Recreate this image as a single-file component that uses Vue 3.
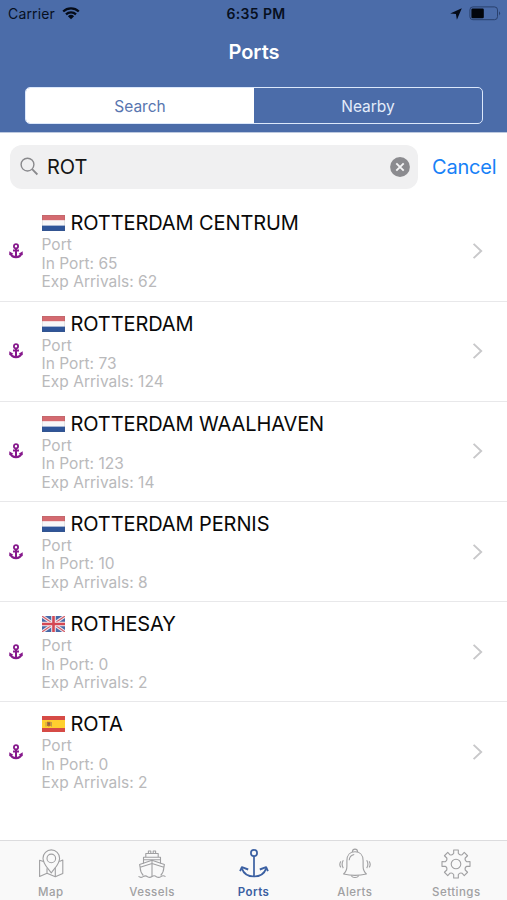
<script setup>
const ports = [
  { name: 'ROTTERDAM CENTRUM', flag: 'nl', inPort: 65, arrivals: 62 },
  { name: 'ROTTERDAM', flag: 'nl', inPort: 73, arrivals: 124 },
  { name: 'ROTTERDAM WAALHAVEN', flag: 'nl', inPort: 123, arrivals: 14 },
  { name: 'ROTTERDAM PERNIS', flag: 'nl', inPort: 10, arrivals: 8 },
  { name: 'ROTHESAY', flag: 'gb', inPort: 0, arrivals: 2 },
  { name: 'ROTA', flag: 'es', inPort: 0, arrivals: 2 },
]
const tabs = ['Map', 'Vessels', 'Ports', 'Alerts', 'Settings']

// Outline of an eight-toothed gear centred on 16,16, with rounded valleys between the teeth
function gearPath() {
  const at = (r, deg) => {
    const a = (deg * Math.PI) / 180
    return `${(16 + r * Math.sin(a)).toFixed(2)} ${(16 - r * Math.cos(a)).toFixed(2)}`
  }
  let d = ''
  for (let i = 0; i < 8; i++) {
    const c = i * 45
    d += `${i ? 'L' : 'M'}${at(11, c - 12)}L${at(14.2, c - 9.5)}L${at(14.2, c + 9.5)}L${at(11, c + 12)}Q${at(9.2, c + 22.5)} ${at(11, c + 33)}`
  }
  return `${d}Z`
}
const gear = gearPath()
</script>

<template>
  <div class="screen">
    <header class="header">
      <div class="status">
        <div class="carrier">
          <span>Carrier</span>
          <svg width="18" height="13" viewBox="0 0 18 13">
            <path d="M1.2 4.5a11.3 11.3 0 0 1 15.6 0M4 7.4a7.3 7.3 0 0 1 10 0" fill="none" stroke="#050b18" stroke-width="2.3" />
            <path d="M9 12.3 5.9 9.3a4.5 4.5 0 0 1 6.2 0Z" fill="#050b18" />
          </svg>
        </div>
        <div class="clock">6:35 PM</div>
        <div class="indicators">
          <svg width="12" height="12" viewBox="0 0 12 12"><path d="M11.8.2 6.9 11.8 5.9 6.1.2 5.5Z" fill="#050b18" /></svg>
          <svg width="32" height="15" viewBox="0 0 32 15">
            <rect x=".9" y=".9" width="27.6" height="12.8" rx="3" fill="none" stroke="#29406d" stroke-width="1" />
            <rect x="2.4" y="2.5" width="12.4" height="9.7" rx="1.2" fill="#02050b" />
            <path d="M30 5.2q2.2 2.1 0 4.2Z" fill="#29406d" />
          </svg>
        </div>
      </div>
      <h1 class="title">Ports</h1>
      <div class="segments">
        <div class="segment selected">Search</div>
        <div class="segment">Nearby</div>
      </div>
    </header>

    <div class="search">
      <div class="field">
        <svg width="20" height="20" viewBox="0 0 20 20" fill="none" stroke="#89898c" stroke-width="1.4">
          <circle cx="7.5" cy="7.6" r="6.4" /><path d="m12.1 12.2 5.3 5.3" stroke-width="1.8" />
        </svg>
        <span class="query">ROT</span>
        <svg class="clear" width="20" height="20" viewBox="0 0 20 20">
          <circle cx="10" cy="10" r="9.9" fill="#8b8b8f" />
          <path d="m6.3 6.3 7.4 7.4m0-7.4-7.4 7.4" stroke="#f5f5f6" stroke-width="1.9" />
        </svg>
      </div>
      <span class="cancel">Cancel</span>
    </div>

    <main class="list">
      <article v-for="port in ports" :key="port.name" class="row">
        <svg class="anchor" width="14" height="16" viewBox="0 0 14 16" fill="none" stroke="#86198c">
          <circle cx="7" cy="3.2" r="2.1" stroke-width="1.8" />
          <path d="M7 5.3v8.6M4 7.4h6" stroke-width="2" />
          <path d="M1.5 10.4c.8 2.4 2.6 3.7 5.5 3.8 2.9-.1 4.7-1.4 5.5-3.8" stroke-width="2.2" />
          <path d="M.3 8.3v4l4-1.6ZM13.7 8.3v4l-4-1.6Z" fill="#86198c" stroke="none" />
        </svg>
        <div class="info">
          <div class="name">
            <svg v-if="port.flag === 'nl'" width="23" height="16" viewBox="0 0 23 16">
              <path fill="#d46a70" d="M0 0h23v5.5H0z" /><path fill="#f7f7f8" d="M0 5.4h23v5.3H0z" /><path fill="#2f5599" d="M0 10.6h23V16H0z" />
              <path d="M.3.3h22.4v15.4H.3z" fill="none" stroke="#555" stroke-opacity=".25" stroke-width=".6" />
            </svg>
            <svg v-else-if="port.flag === 'gb'" width="23" height="16" viewBox="0 0 23 16">
              <path fill="#4969a6" d="M0 0h23v16H0z" />
              <path d="m0 0 23 16M23 0 0 16" stroke="#eee9ef" stroke-width="3.2" />
              <path d="m0 0 23 16M23 0 0 16" stroke="#d65c66" stroke-width="1.1" />
              <path d="M11.5 0v16M0 8h23" stroke="#f2edf0" stroke-width="4.6" />
              <path d="M11.5 0v16M0 8h23" stroke="#d44853" stroke-width="2.6" />
            </svg>
            <svg v-else width="23" height="16" viewBox="0 0 23 16">
              <path fill="#d64b46" d="M0 0h23v16H0z" /><path fill="#ffd02f" d="M0 4h23v8H0z" />
              <path d="M4 6v4.6M9.5 6v4.6" stroke="#b9984c" stroke-width=".9" />
              <path d="M5 5.7h3.6v3.5q-1.8 2.4-3.6 0Z" fill="#b66b37" />
              <circle cx="6.9" cy="7.8" r="1" fill="#6f6d51" />
            </svg>
            <span>{{ port.name }}</span>
          </div>
          <div class="detail">Port</div>
          <div class="detail">In Port: {{ port.inPort }}</div>
          <div class="detail">Exp Arrivals: {{ port.arrivals }}</div>
        </div>
        <svg class="chevron" width="11" height="18" viewBox="0 0 11 18"><path d="m1.6 1.9 7.6 7.1-7.6 7.1" fill="none" stroke="#c8c8ca" stroke-width="1.9" /></svg>
      </article>
    </main>

    <nav class="tabs">
      <div v-for="tab in tabs" :key="tab" class="tab" :class="{ active: tab === 'Ports' }">
        <svg width="32" height="32" viewBox="0 0 32 32" fill="none" stroke="currentColor" stroke-width="1.1" stroke-linejoin="round">
          <g v-if="tab === 'Map'">
            <path d="M16.3 25C13.5 20.5 8 16.5 8 10.2a8.3 8.3 0 0 1 16.6 0C24.6 16.5 19 20.5 16.3 25Z" />
            <circle cx="16.3" cy="10.4" r="4.3" />
            <path d="M8.5 13.5 4.6 12.2v16.2l7.4-3.2 8.3 3.6 7.5-3.2V12l-3.4 1.4M12 20.2v5M20.3 19.7v9.1" />
          </g>
          <g v-else-if="tab === 'Vessels'">
            <path d="M12.4 5.5V3h2.4v2.5M17.2 5.5V3h2.4v2.5M9.8 5.5h12.4v3.7H9.8zM7.5 15.4V9.2h17v6.2M7.5 11.8h17" />
            <path d="m3.6 16.4 12.4-4.2 12.4 4.2-.5 2.9L16 15.5 4.1 19.3ZM4.1 19.3q.2 5 3.2 8.2M27.9 19.3q-.2 5-3.2 8.2M16 12.2v16" />
            <path d="M2.5 28.4q2.3 1.8 4.6.2 2.2-1.6 4.5.1 2.2 1.4 4.4-.2 2.2-1.6 4.4.2 2.3 1.5 4.5-.1 2.2-1.6 4.6 0" />
          </g>
          <g v-else-if="tab === 'Ports'" stroke-width="1.7">
            <circle cx="16" cy="5" r="3.1" />
            <path d="M16 8.1v20.4M3.8 20.4C5.6 25.6 9.5 28.5 16 28.5s10.4-2.9 12.2-8.1" />
            <path d="m2.1 23.2 1.8-4 6.3 2.3M29.9 23.2l-1.8-4-6.3 2.3" stroke-width="1.9" />
          </g>
          <g v-else-if="tab === 'Alerts'">
            <path d="M13.5 4v-.4a2.5 2.5 0 0 1 5 0V4M4.6 26q3.3-3 3.3-7.4v-6.1c0-5.6 3.4-8.7 8.1-8.7s8.1 3.1 8.1 8.7v6.1q0 4.4 3.3 7.4Q16 28.7 4.6 26Z" />
            <path d="M12.4 27.5q.4 2 3.6 2t3.6-2M10.2 12.3c.2-3.3 2.1-5.2 5-5.8M4.3 12.3q-2.4 4 0 7.8M1.9 13.4q-2.2 3 0 6M27.7 12.3q2.4 4 0 7.8M30.1 13.4q2.2 3 0 6" />
          </g>
          <g v-else>
            <path :d="gear" /><circle cx="16" cy="16" r="4.8" />
          </g>
        </svg>
        <span>{{ tab }}</span>
      </div>
    </nav>
  </div>
</template>

<style>
body { margin: 0; background: #fff; }
</style>

<style scoped>
.screen {
  display: flex;
  flex-direction: column;
  width: 507px;
  height: 900px;
  overflow: hidden;
  background: #fff;
  font-family: Inter, "Liberation Sans", sans-serif;
}
svg { display: block; flex: none; }
.header {
  height: 132px;
  flex: none;
  background: #4b6ca9;
  border-bottom: 1px solid #bdc9df;
}
.status {
  display: grid;
  grid-template-columns: 1fr auto 1fr;
  align-items: center;
  height: 27px;
  padding: 0 6px 0 8px;
  color: #07101f;
  font-size: 14px;
}
.carrier { display: flex; align-items: center; gap: 7px; letter-spacing: 0.15px; }
.clock { margin-left: 3px; font-weight: 600; letter-spacing: 0.35px; }
.indicators { display: flex; align-items: center; justify-content: flex-end; gap: 7px; }
.title {
  margin: 11px 0 0 1px;
  line-height: 28px;
  color: #fff;
  font-size: 20px;
  font-weight: 600;
  text-align: center;
}
.segments {
  display: flex;
  height: 37px;
  margin: 21px 24px 0 25px;
  box-sizing: border-box;
  border: 1.5px solid #dce8fb;
  border-radius: 5px;
  overflow: hidden;
}
.segment {
  flex: 1;
  display: flex;
  align-items: center;
  justify-content: center;
  padding-top: 2px;
  color: #e4ecfa;
  font-size: 15.5px;
}
.segment.selected { background: #fff; color: #5876b0; }
.search {
  display: flex;
  align-items: center;
  flex: none;
  height: 68px;
  padding: 0 10px;
}
.field {
  display: flex;
  align-items: center;
  flex: none;
  width: 408px;
  height: 44px;
  box-sizing: border-box;
  padding: 0 8px 0 10px;
  border-radius: 12px;
  background: #f0f0f1;
}
.query { margin-left: 7px; color: #151515; font-size: 20px; }
.clear { margin-left: auto; }
.cancel { margin-left: 14px; color: #1781f7; font-size: 20px; letter-spacing: -0.2px; }
.list { flex: 1; padding-top: 0.4px; }
.row {
  display: flex;
  align-items: center;
  height: 100.2px;
  box-sizing: border-box;
  padding: 0 24px 0 9px;
  border-bottom: 1px solid #e8e8ea;
}
.row:last-child { border-bottom-color: transparent; }
.info { flex: 1; margin-left: 18.5px; }
.name {
  display: flex;
  align-items: center;
  gap: 6px;
  height: 26px;
  color: #090909;
  font-size: 20px;
  letter-spacing: -0.1px;
  white-space: nowrap;
}
.detail {
  height: 18.4px;
  line-height: 18.4px;
  color: #b9b9bb;
  font-size: 15.5px;
  letter-spacing: 0.02px;
}
.tabs {
  display: flex;
  flex: none;
  height: 60px;
  box-sizing: border-box;
  border-top: 1px solid #dcdcde;
  background: #f9f9f9;
}
.tab {
  display: flex;
  flex: 1;
  flex-direction: column;
  align-items: center;
  padding-top: 7px;
  color: #a0a0a2;
  font-size: 11.5px;
  font-weight: 500;
  line-height: 14px;
  letter-spacing: 0.45px;
}
.tab span { margin-top: 5px; }
.tab.active { color: #3b60a2; font-weight: 600; }
</style>
